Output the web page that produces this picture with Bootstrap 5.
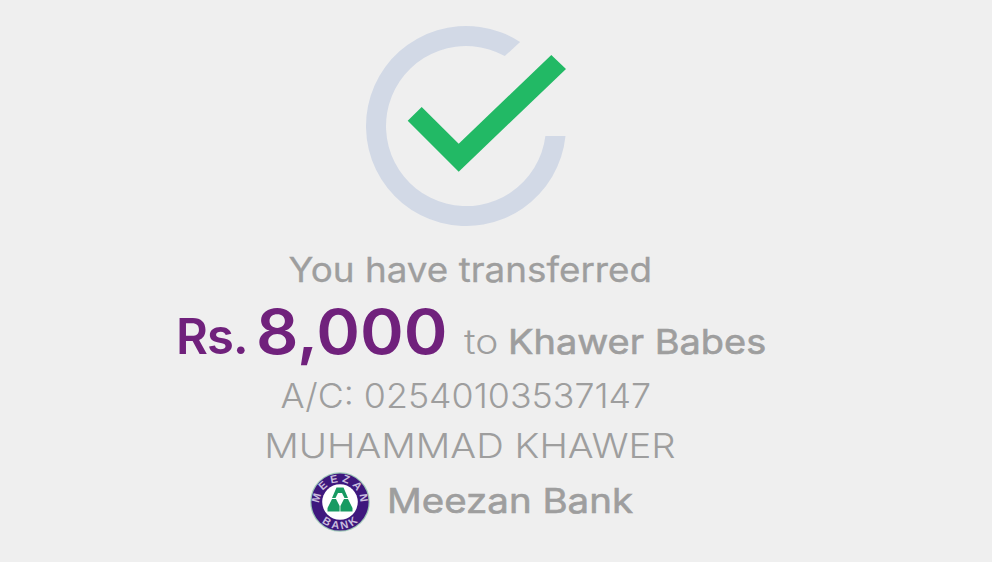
<!DOCTYPE html>
<html lang="en">
<head>
<meta charset="utf-8">
<meta name="viewport" content="width=device-width, initial-scale=1">
<title>Transfer complete</title>
<link href="https://cdn.jsdelivr.net/npm/bootstrap@5.3.0/dist/css/bootstrap.min.css" rel="stylesheet">
<style>
body{background:#efefef;color:#9e9e9e;font-family:Inter,"Open Sans",sans-serif;overflow:hidden}
.receipt{width:940px;padding-top:26px;white-space:nowrap}
.status-icon{width:200px;height:200px;margin-right:8px}
.line{font-size:34.5px;line-height:50px}
.heading{margin-top:19px;transform:scaleX(1.067);-webkit-text-stroke:.3px #9e9e9e}
.amount-line{width:588px;height:76px;line-height:76px;margin-top:-1px}
.currency{width:80px;font-size:49px;font-weight:600;color:#70217c;letter-spacing:-1px}
.amount{width:208px;font-size:62px;font-weight:600;color:#70217c;transform:scaleX(1.07);transform-origin:left}
.to-word{width:44px;font-weight:300;transform:scaleX(1.13);transform-origin:left}
.payee{transform:scaleX(1.1);transform-origin:left;-webkit-text-stroke:.6px #9e9e9e}
.account{font-weight:300;margin:1px 9px 0 0;transform:scaleX(1.037)}
.holder{font-weight:300;transform:scaleX(1.112)}
.bank-row{width:320px;margin-top:1px}
.bank-logo{width:60px;height:60px}
.bank-name{margin:-3px 0 0 17px;transform:scaleX(1.115);transform-origin:left;-webkit-text-stroke:.6px #9e9e9e}
</style>
<script src="https://cdn.jsdelivr.net/npm/bootstrap@5.3.0/dist/js/bootstrap.bundle.min.js"></script>
</head>
<body>
<main class="receipt d-flex flex-column align-items-center">
  <svg class="status-icon flex-shrink-0" viewBox="0 0 200 200" aria-hidden="true">
    <path fill="#d2d9e6" d="M154.1 15.9A100 100 0 1 0 199.5 110H179.4A80 80 0 1 1 138.8 30.1Z"/>
    <path fill="#22b965" d="M185.3 29 200 43 92.7 145.7 41.7 94.7 55.7 81 92.7 117.7Z"/>
  </svg>
  <div class="line heading">You have transferred</div>
  <div class="line amount-line d-flex align-items-baseline"><span class="currency">Rs.</span><span class="amount">8,000</span><span class="to-word">to</span><span class="payee">Khawer Babes</span></div>
  <div class="line account">A/C: 02540103537147</div>
  <div class="line holder">MUHAMMAD KHAWER</div>
  <div class="line bank-row d-flex align-items-center">
    <svg class="bank-logo flex-shrink-0" viewBox="0 0 60 60" aria-hidden="true">
      <defs><path id="top-arc" d="M10.5 36A20.3 20.3 0 1 1 49.5 36"/><path id="bottom-arc" d="M3 30A27 27 0 0 0 57 30"/></defs>
      <circle cx="30" cy="30" r="29.8" fill="#9fc9b8"/><circle cx="30" cy="30" r="28.6" fill="#3e187d"/>
      <circle cx="30" cy="30" r="17.8" fill="#fff"/>
      <path fill="#189a62" d="M26.5 15.5H33.5L38 26H34.5L32 21H28L25.5 26H22ZM22 27H26L29.6 34V39.5H17.5V36ZM34 27H38L42.5 36V39.5H30.4V34Z"/>
      <g fill="#c9bddd" font-family="Liberation Sans,sans-serif" font-weight="700" font-size="11" text-anchor="middle">
        <text letter-spacing="3.6"><textPath href="#top-arc" startOffset="51.5%">MEEZAN</textPath></text>
        <text letter-spacing="2.6"><textPath href="#bottom-arc" startOffset="51.5%">BANK</textPath></text>
      </g>
    </svg>
    <span class="bank-name">Meezan Bank</span>
  </div>
</main>
</body>
</html>
